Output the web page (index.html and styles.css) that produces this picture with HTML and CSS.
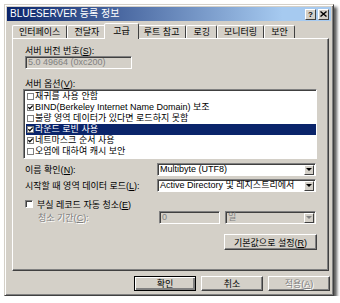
FILE: index.html
```html
<!doctype html>
<html lang="ko">
<head>
    <meta charset="UTF-8">
    <title>BLUESERVER 등록 정보</title>
    <link rel="stylesheet" href="styles.css">
</head>
<body>
<div class="window">
    <div class="titlebar">
        <span class="titlebar__text">BLUESERVER 등록 정보</span>
        <div class="titlebar__btns">
            <span class="titlebar__btn titlebar__btn--help">?</span>
            <span class="titlebar__btn">
                <svg width="7" height="6" viewBox="0 0 7 6"><path d="M0.5 0.5 L6.5 5.5 M6.5 0.5 L0.5 5.5" stroke="#000" stroke-width="1.4"/></svg>
            </span>
        </div>
    </div>

    <ul class="tabs">
        <li class="tab">인터페이스</li>
        <li class="tab">전달자</li>
        <li class="tab tab--active">고급</li>
        <li class="tab">루트 참고</li>
        <li class="tab">로깅</li>
        <li class="tab">모니터링</li>
        <li class="tab">보안</li>
    </ul>

    <div class="panel">
        <div class="field-label">서버 버전 번호(<u>S</u>):</div>
        <div class="textbox textbox--readonly">5.0 49664 (0xc200)</div>

        <div class="field-label field-label--gap">서버 옵션(<u>V</u>):</div>
        <ul class="listbox">
            <li class="listbox__item"><span class="check"></span>재귀를 사용 안함</li>
            <li class="listbox__item"><span class="check check--on"><svg width="5" height="5" viewBox="0 0 5 5"><path d="M0.3 2.2 L1.8 3.8 L4.7 0.6" fill="none" stroke="#000" stroke-width="1.3"/></svg></span>BIND(Berkeley Internet Name Domain) 보조</li>
            <li class="listbox__item"><span class="check"></span>불량 영역 데이터가 있다면 로드하지 못함</li>
            <li class="listbox__item listbox__item--selected"><span class="check check--on"><svg width="5" height="5" viewBox="0 0 5 5"><path d="M0.3 2.2 L1.8 3.8 L4.7 0.6" fill="none" stroke="#000" stroke-width="1.3"/></svg></span>라운드 로빈 사용</li>
            <li class="listbox__item"><span class="check check--on"><svg width="5" height="5" viewBox="0 0 5 5"><path d="M0.3 2.2 L1.8 3.8 L4.7 0.6" fill="none" stroke="#000" stroke-width="1.3"/></svg></span>네트마스크 순서 사용</li>
            <li class="listbox__item"><span class="check"></span>오염에 대하여 캐시 보안</li>
        </ul>

        <div class="row row--first">
            <span class="row__label">이름 확인(<u>N</u>):</span>
            <div class="combo">
                <span class="combo__value">Multibyte (UTF8)</span>
                <span class="combo__btn"><span class="arrow"></span></span>
            </div>
        </div>
        <div class="row">
            <span class="row__label">시작할 때 영역 데이터 로드(<u>L</u>):</span>
            <div class="combo">
                <span class="combo__value">Active Directory 및 레지스트리에서</span>
                <span class="combo__btn"><span class="arrow"></span></span>
            </div>
        </div>

        <div class="checkrow">
            <span class="checkbox"></span>
            <span>부실 레코드 자동 청소(<u>E</u>)</span>
        </div>

        <div class="row row--period">
            <span class="row__label row__label--disabled">청소 기간(<u>C</u>):</span>
            <div class="period">
                <div class="textbox textbox--disabled">0</div>
                <div class="combo combo--disabled">
                    <span class="combo__value">일</span>
                    <span class="combo__btn"><span class="arrow"></span></span>
                </div>
            </div>
        </div>

        <div class="panel__actions">
            <button class="btn btn--wide" type="button">기본값으로 설정(<u>R</u>)</button>
        </div>
    </div>

    <div class="footer">
        <button class="btn btn--default" type="button">확인</button>
        <button class="btn" type="button">취소</button>
        <button class="btn btn--disabled" type="button">적용(<u>A</u>)</button>
    </div>
</div>
</body>
</html>
```

FILE: styles.css
```css
body {
    margin: 0;
    background: #ffffff;
    font-family: "Liberation Sans", "Noto Sans CJK KR", sans-serif;
    font-size: 9px;
    color: #000000;
}

ul {
    list-style: none;
    margin: 0;
    padding: 0;
}

u {
    text-decoration-thickness: 1px;
    text-underline-offset: 1px;
}

.window {
    width: 324px;
    height: 286px;
    margin: 4px 0 0 4px;
    padding: 2px;
    background: #d4d0c8;
    border: 1px solid;
    border-color: #d4d0c8 #404040 #404040 #d4d0c8;
    box-shadow: inset 1px 1px #ffffff, inset -1px -1px #808080, 3px 3px 3px rgba(0, 0, 0, 0.65);
    display: flex;
    flex-direction: column;
}

.titlebar {
    height: 14px;
    display: flex;
    align-items: center;
    justify-content: space-between;
    padding: 0 2px 0 3px;
    background: linear-gradient(to right, #0a246a, #a6caf0 85%);
}

.titlebar__text {
    color: #ffffff;
    font-size: 10px;
    line-height: 14px;
}

.titlebar__btns {
    display: flex;
    gap: 2px;
}

.titlebar__btn {
    width: 9px;
    height: 9px;
    display: flex;
    align-items: center;
    justify-content: center;
    background: #d4d0c8;
    border: 1px solid;
    border-color: #ffffff #404040 #404040 #ffffff;
    font-weight: bold;
    font-size: 8px;
    line-height: 9px;
}

.tabs {
    display: flex;
    align-items: flex-end;
    height: 15px;
    margin: 2px 0 0 5px;
}

.tab {
    height: 12px;
    line-height: 12px;
    padding: 0 6px 0 6px;
    border: 1px solid;
    border-bottom: none;
    border-color: #ffffff #404040 transparent #ffffff;
    border-radius: 2px 2px 0 0;
    white-space: nowrap;
}

.tab--active {
    height: 15px;
    line-height: 14px;
    margin: 0 -2px -1px;
    padding: 0 8px;
    position: relative;
    background: #d4d0c8;
}

.panel {
    height: 231px;
    margin: 0 2px 0 5px;
    padding: 0 11px 0 10px;
    border: 1px solid;
    border-color: #ffffff #404040 #404040 #ffffff;
    box-shadow: inset -1px -1px #808080;
    display: flex;
    flex-direction: column;
}

.field-label {
    margin: 7px 0 0 2px;
    line-height: 10px;
}

.field-label--gap {
    margin-top: 10px;
}

.textbox {
    height: 9px;
    line-height: 9px;
    padding: 1px 2px;
    border: 1px solid;
    border-color: #808080 #ffffff #ffffff #808080;
    box-shadow: inset 1px 1px #404040;
    background: #ffffff;
    white-space: nowrap;
    overflow: hidden;
}

.textbox--readonly {
    width: 101px;
    margin-left: 2px;
    background: #d4d0c8;
    color: #808080;
}

.textbox--disabled {
    width: 55px;
    background: #d4d0c8;
    color: #808080;
}

.listbox {
    height: 66px;
    padding: 1px 0 1px 2px;
    border: 1px solid;
    border-color: #808080 #ffffff #ffffff #808080;
    box-shadow: inset 1px 1px #404040;
    background: #ffffff;
}

.listbox__item {
    height: 11px;
    line-height: 11px;
    display: flex;
    align-items: center;
    white-space: nowrap;
}

.listbox__item--selected {
    background: #0a246a;
    color: #ffffff;
}

.check {
    width: 5px;
    height: 5px;
    margin: 0 1px 0 1px;
    border: 1px solid #808080;
    background: #ffffff;
    display: flex;
    flex: none;
}

.row {
    display: flex;
    align-items: center;
    justify-content: space-between;
    margin-top: 3px;
    height: 13px;
}

.row--first {
    margin-top: 4px;
}

.row--period {
    margin-top: 2px;
}

.row__label {
    padding-left: 2px;
}

.row__label--disabled {
    padding-left: 15px;
    color: #808080;
    text-shadow: 1px 1px #ffffff;
}

.combo {
    width: 154px;
    height: 11px;
    display: flex;
    align-items: center;
    justify-content: space-between;
    border: 1px solid;
    border-color: #808080 #ffffff #ffffff #808080;
    box-shadow: inset 1px 1px #404040;
    background: #ffffff;
    padding: 0 1px 0 2px;
    margin-right: 1px;
}

.combo__value {
    line-height: 11px;
    white-space: nowrap;
}

.combo__btn {
    width: 8px;
    height: 8px;
    display: flex;
    align-items: center;
    justify-content: center;
    background: #d4d0c8;
    border: 1px solid;
    border-color: #ffffff #404040 #404040 #ffffff;
}

.arrow {
    width: 0;
    height: 0;
    border-left: 3px solid transparent;
    border-right: 3px solid transparent;
    border-top: 3px solid #000000;
}

.combo--disabled {
    width: 86px;
    margin-right: 0;
    background: #d4d0c8;
    color: #808080;
}

.combo--disabled .arrow {
    border-top-color: #808080;
}

.period {
    display: flex;
    gap: 5px;
    margin-right: 1px;
}

.checkrow {
    display: flex;
    align-items: center;
    gap: 4px;
    height: 10px;
    margin: 7px 0 0 2px;
}

.checkbox {
    width: 6px;
    height: 6px;
    border: 1px solid;
    border-color: #808080 #ffffff #ffffff #808080;
    box-shadow: inset 1px 1px #404040;
    background: #ffffff;
}

.panel__actions {
    display: flex;
    justify-content: flex-end;
    margin-top: 10px;
}

.btn {
    width: 62px;
    height: 15px;
    padding: 0;
    font: inherit;
    color: #000000;
    background: #d4d0c8;
    border: 1px solid;
    border-color: #ffffff #404040 #404040 #ffffff;
    box-shadow: inset -1px -1px #808080;
}

.btn--wide {
    width: 93px;
    height: 16px;
}

.btn--default {
    border: 1px solid #000000;
    box-shadow: inset 1px 1px #ffffff, inset -2px -2px #808080;
}

.btn--disabled {
    color: #808080;
    text-shadow: 1px 1px #ffffff;
}

.footer {
    display: flex;
    justify-content: flex-end;
    gap: 5px;
    margin-top: 5px;
    padding-right: 1px;
}
```
